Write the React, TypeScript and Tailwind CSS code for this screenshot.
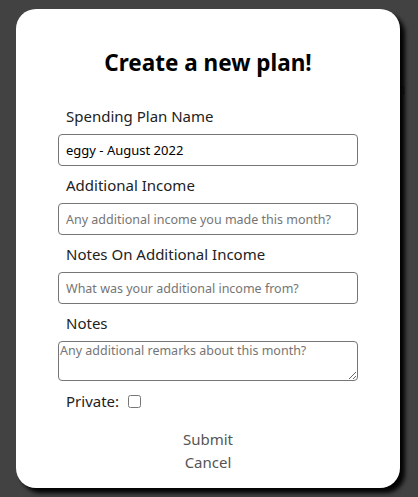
export default function App() {
  return (
    <div className="relative h-[497px] w-[418px] overflow-hidden bg-[#424242] font-['Noto_Sans',sans-serif]">
      {/* page content behind the overlay */}
      <div className="absolute left-[373px] top-[77px] text-[16px] text-[#262626]">Plan</div>

      <div className="absolute left-[16px] top-[9px] flex h-[479px] w-[384px] flex-col items-center rounded-[20px] bg-white shadow-[5px_5px_4px_rgba(0,0,0,0.95)]">
        <h1 className="mt-[38px] text-[22.5px] font-bold leading-[32px] text-black">Create a new plan!</h1>

        <form className="mt-[18px] flex w-[300px] flex-col">
          <Field label="Spending Plan Name">
            <input
              defaultValue="eggy - August 2022"
              className="h-[32px] w-full rounded-[4px] border border-[#767676] px-[7px] text-[13px] text-black outline-none"
            />
          </Field>
          <Field label="Additional Income">
            <input
              placeholder="Any additional income you made this month?"
              className="h-[32px] w-full rounded-[4px] border border-[#767676] px-[7px] text-[12.5px] outline-none placeholder:text-[#757575]"
            />
          </Field>
          <Field label="Notes On Additional Income">
            <input
              placeholder="What was your additional income from?"
              className="h-[32px] w-full rounded-[4px] border border-[#767676] px-[7px] text-[12.5px] outline-none placeholder:text-[#757575]"
            />
          </Field>
          <Field label="Notes">
            <textarea
              placeholder="Any additional remarks about this month?"
              className="block h-[40px] w-full rounded-[4px] border border-[#767676] px-[1px] py-0 text-[12.5px] leading-[18px] outline-none placeholder:text-[#757575]"
            />
          </Field>
          <label className="mt-[9px] flex items-center pl-[8px] text-[15px] leading-[22px] text-[#222]">
            Private:
            <input type="checkbox" className="ml-[9px] h-[13px] w-[13px]" />
          </label>
        </form>

        <button className="mt-[16px] text-[15px] leading-[23px] text-[#555]">Submit</button>
        <button className="text-[15px] leading-[23px] text-[#555]">Cancel</button>
      </div>
    </div>
  );
}

function Field({ label, children }: { label: string; children: React.ReactNode }) {
  return (
    <div className="flex flex-col">
      <label className="mb-[7px] mt-[8px] pl-[8px] text-[15px] leading-[22px] text-[#222]">{label}</label>
      {children}
    </div>
  );
}
